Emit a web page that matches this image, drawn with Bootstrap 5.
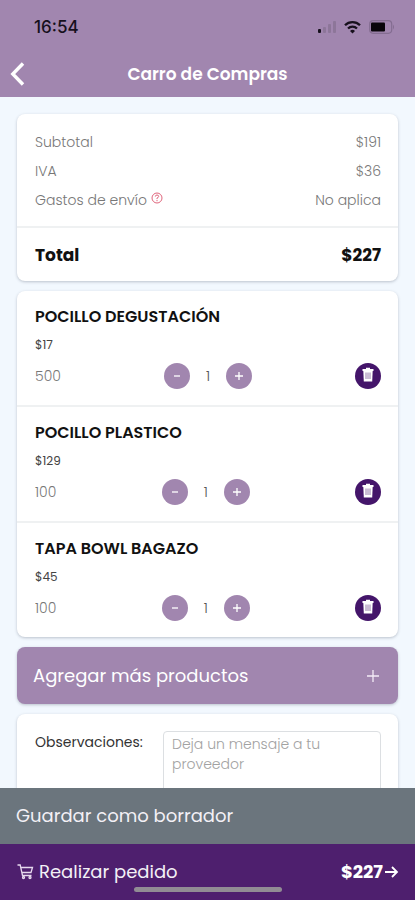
<!DOCTYPE html>
<html lang="es">
<head>
<meta charset="utf-8">
<meta name="viewport" content="width=device-width, initial-scale=1">
<title>Carro de Compras</title>
<link href="https://cdn.jsdelivr.net/npm/bootstrap@5.3.0/dist/css/bootstrap.min.css" rel="stylesheet">
<style>
  body { font-family: Poppins, Inter, "Open Sans", sans-serif; font-size: 14px; line-height: 20px; background: #f2f8fe; color: #111; }
  svg { display: block; }
  .topbar { background: #a186af; }
  .statusbar { height: 54px; padding: 0 20px 0 34px; color: #16101c; font-family: Inter, sans-serif; font-size: 17px; font-weight: 500; }
  .titlebar { height: 43px; padding: 0 36px 4px 0; }
  .titlebar h1 { font-size: 17px; line-height: 24px; font-weight: 600; }
  .back { width: 36px; height: 36px; padding: 0 0 0 10px; border: 0; background: none; }
  .content { padding: 17px 17px 0; gap: 10px; min-height: 0; scrollbar-width: none; }
  .content > * { flex-shrink: 0; }
  .panel { background: #fff; border-radius: 8px; box-shadow: 0 1px 3px rgba(60, 70, 90, .3); }
  .summary { padding: 18px 17px 16px 18px; gap: 9px; color: #777; font-weight: 300; }
  .split { border-top: 2px solid #eff1f2; }
  .total { padding: 15px 17px 14px 18px; font-size: 17px; line-height: 24px; font-weight: 700; }
  .help { padding: 2px 0 0; border: 0; background: none; }
  .product { padding: 15px 17px 16px 18px; }
  .product h2 { font-size: 16px; line-height: 22px; font-weight: 600; margin: 0; }
  .price { font-size: 12px; line-height: 20px; color: #444; margin: 7px 0 8px; }
  .units { color: #777; font-weight: 300; }
  .stepper { gap: 16px; color: #555; font-weight: 300; }
  .round { width: 26px; height: 26px; padding: 0; border: 0; border-radius: 50%; background: #a186af; color: #fff; }
  .trash { background: #44156a; padding-bottom: 4px; }
  .more { padding: 17px 18px 16px 16px; border: 0; border-radius: 8px; background: #a186af; color: #fff; font-size: 18px; line-height: 24px; box-shadow: 0 1px 3px rgba(60, 70, 90, .3); }
  .notes { padding: 17px 17px 17px 18px; }
  .notes label { width: 128px; padding-top: 1px; color: #333; }
  .notes textarea { height: 96px; padding: 2px 8px; border: 1px solid #dcdfe2; border-radius: 4px; font-size: 14px; line-height: 20px; resize: none; font-weight: 300; }
  .notes textarea::placeholder { color: #a2a2a2; }
  .action { border: 0; padding: 16px; font-size: 18px; line-height: 24px; color: #f3f0f6; }
  .draft { background: #6b757d; }
  .order { background: #4e1f6e; }
  .order-label { gap: 5px; }
  .home-bar { left: 50%; bottom: 8px; width: 148px; height: 5px; margin-left: -74px; border-radius: 3px; background: #918c94; }
</style>
</head>
<body>
<div class="d-flex flex-column vh-100">
  <header class="topbar">
    <div class="statusbar d-flex align-items-center justify-content-between">
      <span>16:54</span>
      <span class="d-flex align-items-center gap-2">
        <svg width="18" height="14" viewBox="0 0 18 14" aria-hidden="true"><rect y="9" width="3" height="4" rx="1" fill="#17101c"/><g fill="#8d7699"><rect x="5" y="7" width="3" height="6" rx="1"/><rect x="10" y="4" width="3" height="9" rx="1"/><rect x="15" y="1" width="3" height="12" rx="1"/></g></svg>
        <svg width="17" height="14" viewBox="0 0 17 14" fill="none" stroke="#17101c" stroke-width="2.3" aria-hidden="true"><path d="M1 5.2a10.6 10.6 0 0 1 15 0M4 8.5a6.4 6.4 0 0 1 9 0"/><path d="M8.500 13.500 6 11a3.500 3.500 0 0 1 5 0Z" fill="#17101c" stroke="none"/></svg>
        <svg width="26" height="14" viewBox="0 0 26 14" aria-hidden="true"><rect x=".7" y=".7" width="22" height="12.600" rx="3.500" fill="none" stroke="#846d91" stroke-width="1.200"/><rect x="2" y="2.500" width="14" height="9" rx="1" fill="#08050a"/><path d="M24 4.500q2 2.500 0 5Z" fill="#846d91"/></svg>
      </span>
    </div>
    <div class="titlebar d-flex align-items-center">
      <button class="back" type="button" aria-label="Volver"><svg width="15" height="24" viewBox="0 0 15 24" fill="none" stroke="#fff" stroke-width="3.400"><path d="M13 1.500 2.800 12 13 22.500"/></svg></button>
      <h1 class="flex-fill text-center text-white m-0">Carro de Compras</h1>
    </div>
  </header>

  <main class="content d-flex flex-column flex-fill overflow-auto">
    <section class="panel">
      <div class="summary d-flex flex-column">
        <div class="d-flex justify-content-between"><span>Subtotal</span><span>$191</span></div>
        <div class="d-flex justify-content-between"><span>IVA</span><span>$36</span></div>
        <div class="d-flex justify-content-between">
          <span class="d-flex gap-1">Gastos de envío
            <button class="help d-flex" type="button" aria-label="Ayuda"><svg width="12" height="12" viewBox="0 0 12 12" fill="none" stroke="#e0657c"><circle cx="6" cy="6" r="5"/><path d="M4.300 4.600Q4.400 3 6 3t1.700 1.400Q7.700 5.400 6 6.100v1M6 8v1.200"/></svg></button>
          </span>
          <span>No aplica</span>
        </div>
      </div>
      <div class="total split d-flex justify-content-between"><span>Total</span><span>$227</span></div>
    </section>

    <section class="panel">
      <article class="product">
        <h2>POCILLO DEGUSTACIÓN</h2>
        <p class="price">$17</p>
        <div class="d-flex align-items-center justify-content-between">
          <span class="units">500</span>
          <div class="stepper d-flex align-items-center">
            <button class="round d-flex align-items-center justify-content-center" type="button" aria-label="Quitar uno"><svg width="10" height="10" viewBox="0 0 10 10" stroke="#fff" stroke-width="1.300"><path d="M2 5h6"/></svg></button>
            <span>1</span>
            <button class="round d-flex align-items-center justify-content-center" type="button" aria-label="Agregar uno"><svg width="10" height="10" viewBox="0 0 10 10" stroke="#fff" stroke-width="1.300"><path d="M1 5h8M5 1v8"/></svg></button>
          </div>
          <button class="round trash d-flex align-items-center justify-content-center" type="button" aria-label="Eliminar"><svg width="12" height="15" viewBox="0 0 12 15"><path d="M.5 2H4V.7h4V2h3.500v2H.5Z" fill="#fff"/><path d="M1.300 3.500h9.400l-.5 11H1.800Z" fill="#fff"/><path d="M4 5.500v6.500M6 5.500v6.500M8 5.500v6.500" stroke="#7b5b94" stroke-width=".8"/></svg></button>
        </div>
      </article>
      <article class="product split">
        <h2>POCILLO PLASTICO</h2>
        <p class="price">$129</p>
        <div class="d-flex align-items-center justify-content-between">
          <span class="units">100</span>
          <div class="stepper d-flex align-items-center">
            <button class="round d-flex align-items-center justify-content-center" type="button" aria-label="Quitar uno"><svg width="10" height="10" viewBox="0 0 10 10" stroke="#fff" stroke-width="1.300"><path d="M2 5h6"/></svg></button>
            <span>1</span>
            <button class="round d-flex align-items-center justify-content-center" type="button" aria-label="Agregar uno"><svg width="10" height="10" viewBox="0 0 10 10" stroke="#fff" stroke-width="1.300"><path d="M1 5h8M5 1v8"/></svg></button>
          </div>
          <button class="round trash d-flex align-items-center justify-content-center" type="button" aria-label="Eliminar"><svg width="12" height="15" viewBox="0 0 12 15"><path d="M.5 2H4V.7h4V2h3.500v2H.5Z" fill="#fff"/><path d="M1.300 3.500h9.400l-.5 11H1.800Z" fill="#fff"/><path d="M4 5.500v6.500M6 5.500v6.500M8 5.500v6.500" stroke="#7b5b94" stroke-width=".8"/></svg></button>
        </div>
      </article>
      <article class="product split">
        <h2>TAPA BOWL BAGAZO</h2>
        <p class="price">$45</p>
        <div class="d-flex align-items-center justify-content-between">
          <span class="units">100</span>
          <div class="stepper d-flex align-items-center">
            <button class="round d-flex align-items-center justify-content-center" type="button" aria-label="Quitar uno"><svg width="10" height="10" viewBox="0 0 10 10" stroke="#fff" stroke-width="1.300"><path d="M2 5h6"/></svg></button>
            <span>1</span>
            <button class="round d-flex align-items-center justify-content-center" type="button" aria-label="Agregar uno"><svg width="10" height="10" viewBox="0 0 10 10" stroke="#fff" stroke-width="1.300"><path d="M1 5h8M5 1v8"/></svg></button>
          </div>
          <button class="round trash d-flex align-items-center justify-content-center" type="button" aria-label="Eliminar"><svg width="12" height="15" viewBox="0 0 12 15"><path d="M.5 2H4V.7h4V2h3.500v2H.5Z" fill="#fff"/><path d="M1.300 3.500h9.400l-.5 11H1.800Z" fill="#fff"/><path d="M4 5.500v6.500M6 5.500v6.500M8 5.500v6.500" stroke="#7b5b94" stroke-width=".8"/></svg></button>
        </div>
      </article>
    </section>

    <button class="more d-flex align-items-center justify-content-between text-start" type="button">
      <span>Agregar más productos</span>
      <svg width="14" height="14" viewBox="0 0 14 14" stroke="#f4ecf8" stroke-width="1.300" aria-hidden="true"><path d="M1 7h12M7 1v12"/></svg>
    </button>

    <section class="panel notes d-flex align-items-start">
      <label for="notes" class="flex-shrink-0">Observaciones:</label>
      <textarea id="notes" class="form-control" placeholder="Deja un mensaje a tu proveedor"></textarea>
    </section>
  </main>

  <footer class="d-flex flex-column position-relative">
    <button class="action draft text-start" type="button">Guardar como borrador</button>
    <button class="action order d-flex align-items-center justify-content-between" type="button">
      <span class="order-label d-flex align-items-center"><svg width="18" height="18" viewBox="0 0 18 18" fill="none" stroke="#e6d9ee" stroke-width="1.300" aria-hidden="true"><path d="M1.500 2h2.700l2.300 10.500h9M4.800 4.500H16.500L15 9.500H6"/><circle cx="7.500" cy="14.500" r="1"/><circle cx="14" cy="14.500" r="1"/></svg>Realizar pedido</span>
      <span class="d-flex align-items-center fw-bold text-white">$227<svg width="16" height="16" viewBox="0 0 16 16" fill="none" stroke="#fff" stroke-width="1.800" aria-hidden="true"><path d="M2 8h12M9 3l5 5-5 5"/></svg></span>
    </button>
    <span class="home-bar position-absolute"></span>
  </footer>
</div>
<script src="https://cdn.jsdelivr.net/npm/bootstrap@5.3.0/dist/js/bootstrap.bundle.min.js"></script>
</body>
</html>
